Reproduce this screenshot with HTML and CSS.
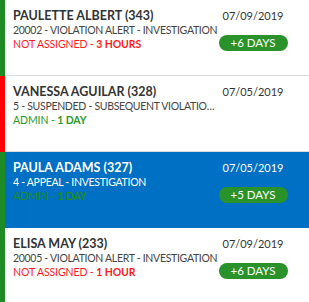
FILE: index.html
```html
<!DOCTYPE html>
<html>
<head>
<meta charset="utf-8">
<link rel="stylesheet" href="styles.css">
</head>
<body>
<div class="list">
  <div class="row">
    <div class="bar green"></div>
    <div class="content">
      <div class="info">
        <div class="name">PAULETTE ALBERT (343)</div>
        <div class="desc">20002 - VIOLATION ALERT - INVESTIGATION</div>
        <div class="status red-text">NOT ASSIGNED - <b>3 HOURS</b></div>
      </div>
      <div class="side">
        <div class="date">07/09/2019</div>
        <div class="badge">+6 DAYS</div>
      </div>
    </div>
  </div>
  <div class="row">
    <div class="bar red"></div>
    <div class="content">
      <div class="info">
        <div class="name">VANESSA AGUILAR (328)</div>
        <div class="desc">5 - SUSPENDED - SUBSEQUENT VIOLATION ALERT</div>
        <div class="status green-text">ADMIN - <b>1 DAY</b></div>
      </div>
      <div class="side">
        <div class="date">07/05/2019</div>
      </div>
    </div>
  </div>
  <div class="row selected">
    <div class="bar green"></div>
    <div class="content">
      <div class="info">
        <div class="name">PAULA ADAMS (327)</div>
        <div class="desc">4 - APPEAL - INVESTIGATION</div>
        <div class="status green-text">ADMIN - <b>1 DAY</b></div>
      </div>
      <div class="side">
        <div class="date">07/05/2019</div>
        <div class="badge">+5 DAYS</div>
      </div>
    </div>
  </div>
  <div class="row">
    <div class="bar green"></div>
    <div class="content">
      <div class="info">
        <div class="name">ELISA MAY (233)</div>
        <div class="desc">20005 - VIOLATION ALERT - INVESTIGATION</div>
        <div class="status red-text">NOT ASSIGNED - <b>1 HOUR</b></div>
      </div>
      <div class="side">
        <div class="date">07/09/2019</div>
        <div class="badge">+6 DAYS</div>
      </div>
    </div>
  </div>
</div>
</body>
</html>
```
FILE: styles.css
```css
html, body {
  margin: 0;
  padding: 0;
  background: #fff;
}
body {
  font-family: "Lato", "Open Sans", sans-serif;
  font-size: 11px;
  color: #333;
}
.list {
  display: flex;
  flex-direction: column;
  width: 309px;
}
.row {
  display: flex;
  height: 76px;
}
.bar {
  width: 5px;
  flex: none;
}
.bar.green { background: #1f8b24; }
.bar.red { background: #ff0000; }
.content {
  flex: 1;
  display: flex;
  min-width: 0;
  border-bottom: 1px solid #dcdcdc;
  padding: 9px 29px 0 8px;
}
.selected .content {
  background: #0070c4;
  border-bottom-color: #0070c4;
  color: #fff;
}
.info {
  flex: 1;
  min-width: 0;
  display: flex;
  flex-direction: column;
  margin-right: 4px;
}
.name {
  font-weight: 700;
  font-size: 12.5px;
  line-height: 14px;
  white-space: nowrap;
}
.desc {
  font-size: 10.5px;
  letter-spacing: -0.3px;
  line-height: 14px;
  color: #444;
  white-space: nowrap;
  overflow: hidden;
  text-overflow: ellipsis;
}
.selected .desc { color: #fff; }
.status {
  font-size: 10.5px;
  letter-spacing: -0.1px;
  line-height: 14px;
  white-space: nowrap;
}
.red-text { color: #ff1a1a; }
.green-text { color: #2a9a2a; }
.selected .green-text { color: #1f8b24; }
.side {
  width: 54px;
  flex: none;
  display: flex;
  flex-direction: column;
  align-items: center;
}
.date {
  line-height: 14px;
  white-space: nowrap;
}
.badge {
  flex: none;
  margin-top: 12px;
  width: 69px;
  height: 16px;
  border-radius: 8px;
  background: #2a922a;
  color: #fff;
  text-align: center;
  line-height: 16px;
  font-size: 11.5px;
}
```
